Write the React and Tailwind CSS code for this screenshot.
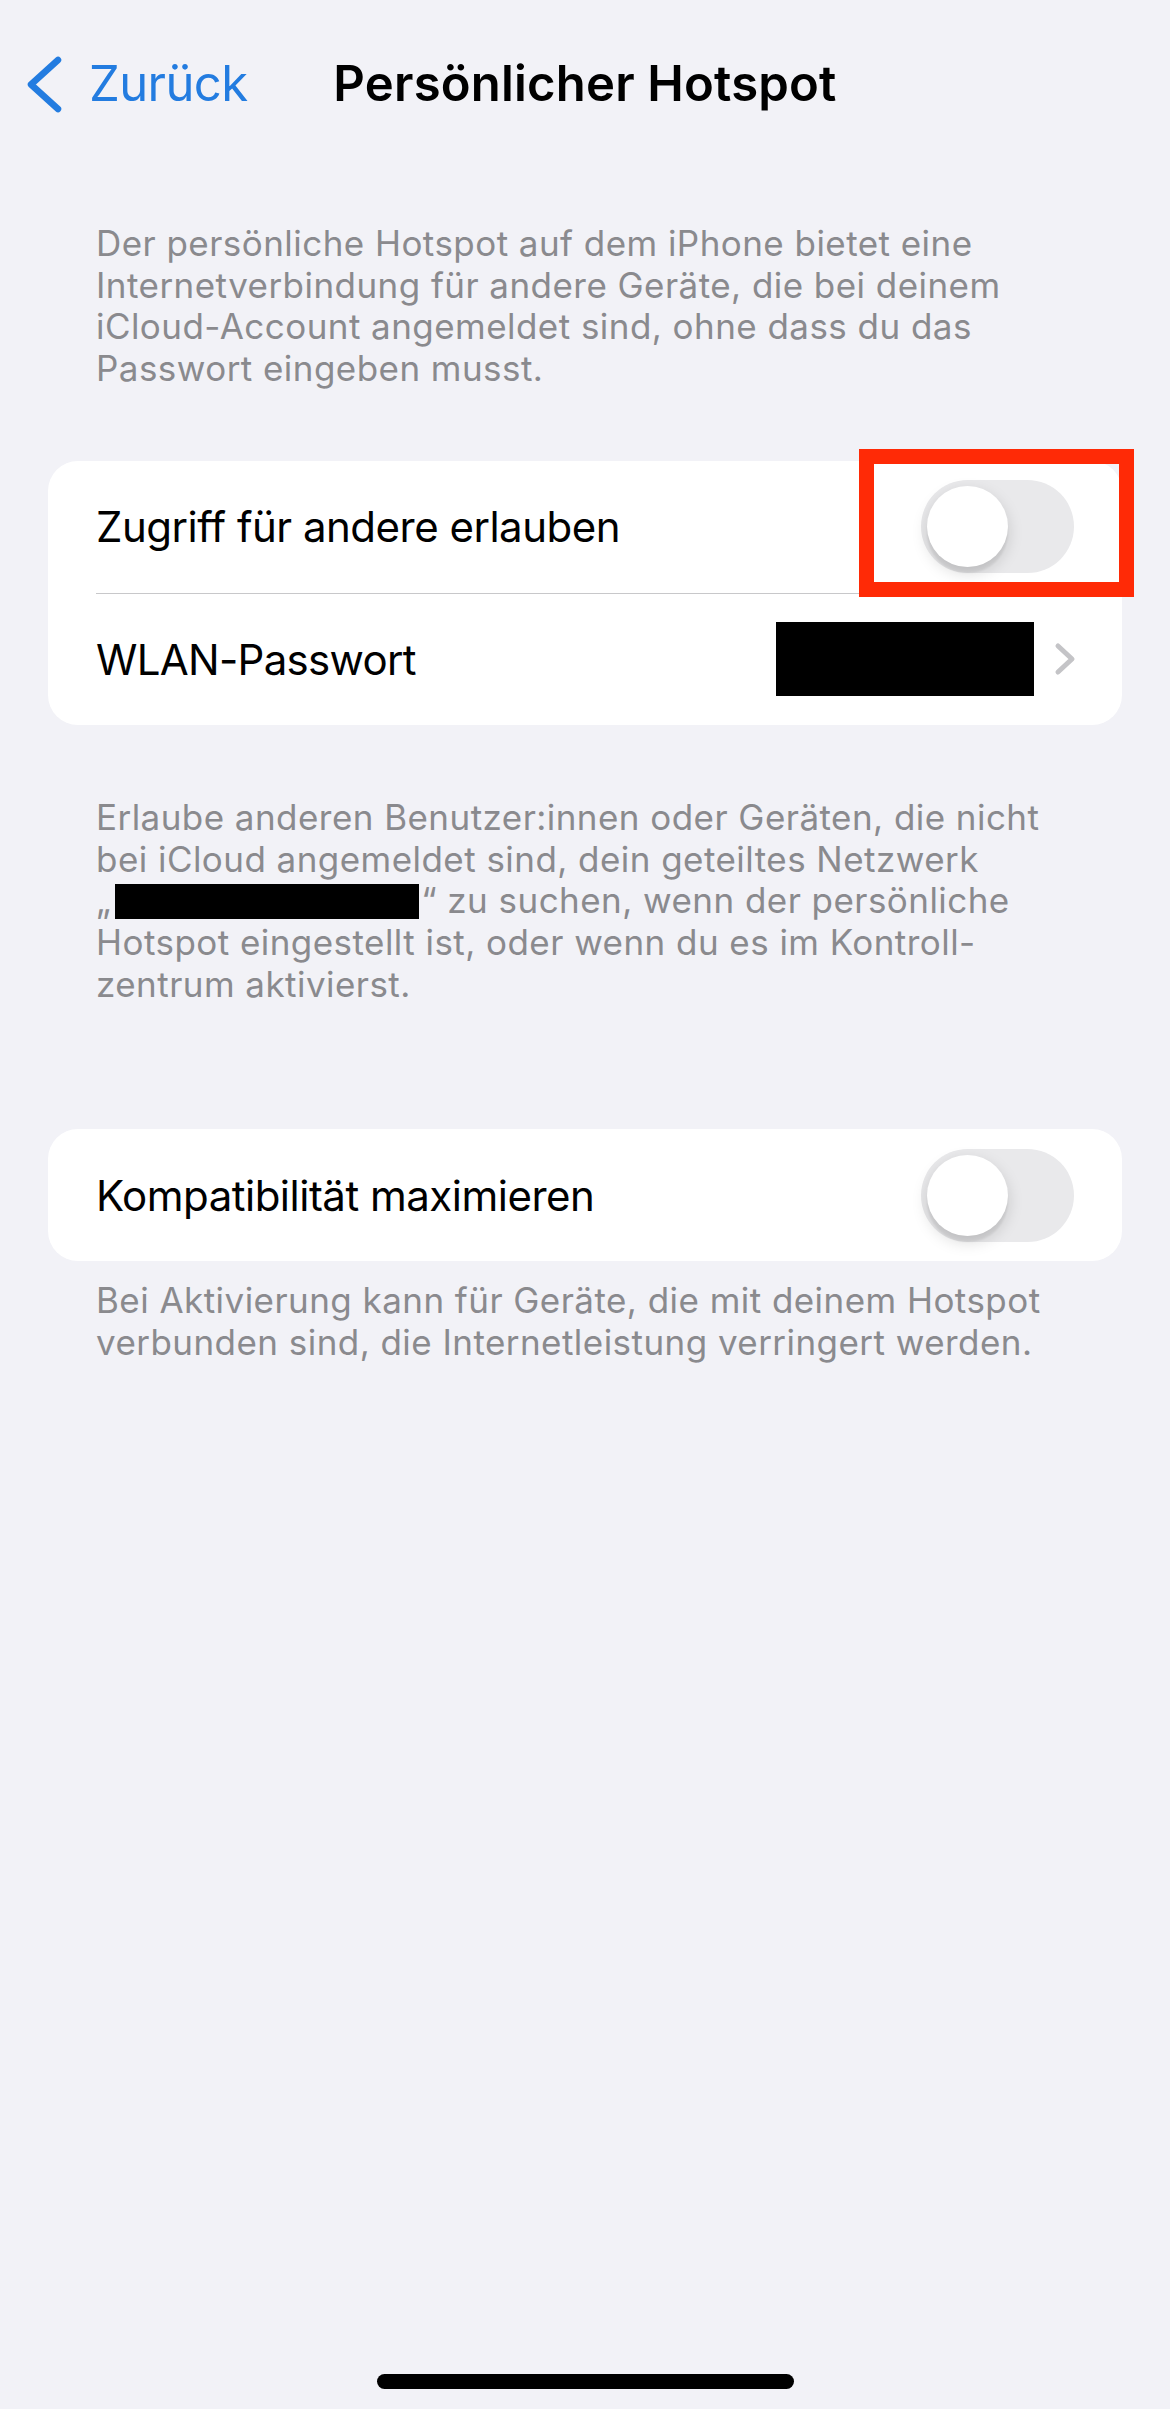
export default function App() {
  const desc = "whitespace-nowrap text-[35px] leading-[41.7px] text-[#8a8a8e] tracking-[0.45px]";
  return (
    <div className="relative flex min-h-[2409px] w-[1170px] flex-col bg-[#f2f2f7] [font-family:Inter,'Liberation_Sans',sans-serif]">
      {/* Nav bar */}
      <div className="grid h-[168px] grid-cols-[1fr_auto_1fr] items-center">
        <div className="flex items-center pl-[25px]">
          <svg width="40" height="60" viewBox="0 0 40 60" className="shrink-0">
            <polyline points="33,6 6,30.5 33,55" fill="none" stroke="#237ce0" strokeWidth="6.5" strokeLinecap="round" strokeLinejoin="round" />
          </svg>
          <span className="ml-[24px] text-[49px] leading-[56px] tracking-[-0.6px] text-[#237ce0]">Zurück</span>
        </div>
        <div className="text-[49px] font-semibold leading-[56px] tracking-[0.2px] text-black">Persönlicher Hotspot</div>
        <div />
      </div>

      {/* Header description */}
      <div className={`mt-[55px] px-[96px] ${desc}`}>
        <span className="block">Der persönliche Hotspot auf dem iPhone bietet eine</span>
        <span className="block">Internetverbindung für andere Geräte, die bei deinem</span>
        <span className="block">iCloud-Account angemeldet sind, ohne dass du das</span>
        <span className="block">Passwort eingeben musst.</span>
      </div>

      {/* Card 1 */}
      <div className="relative mx-[48px] mt-[71px] rounded-[30px] bg-white">
        <div className="flex h-[132px] items-center justify-between pl-[48px] pr-[48px]">
          <span className="text-[42px] tracking-[-0.5px] text-black">Zugriff für andere erlauben</span>
          <Toggle />
        </div>
        <div className="pl-[48px]">
          <div className="flex h-[132px] items-center border-t border-[#c8c8ca] pr-[44px]">
            <span className="text-[42px] tracking-[-0.7px] text-black">WLAN-Passwort</span>
            <div className="ml-auto h-[74px] w-[258px] bg-black" />
            <svg width="26" height="36" viewBox="0 0 26 36" className="ml-[18px] shrink-0">
              <polyline points="6,5 20,18 6,31" fill="none" stroke="#c4c4c7" strokeWidth="5" strokeLinecap="round" strokeLinejoin="round" />
            </svg>
          </div>
        </div>
        {/* red highlight box */}
        <div className="absolute left-[811px] top-[-12px] h-[148px] w-[275px] border-[15px] border-[#ff2a06]" />
      </div>

      {/* Footer 1 */}
      <div className={`mt-[72px] px-[96px] ${desc}`}>
        <span className="block">Erlaube anderen Benutzer:innen oder Geräten, die nicht</span>
        <span className="block">bei iCloud angemeldet sind, dein geteiltes Netzwerk</span>
        <span className="flex items-center">
          <span>„</span>
          <span className="ml-[4px] inline-block h-[35px] w-[304px] bg-black" />
          <span className="ml-[2px] whitespace-pre">“ zu suchen, wenn der persönliche</span>
        </span>
        <span className="block">Hotspot eingestellt ist, oder wenn du es im Kontroll-</span>
        <span className="block">zentrum aktivierst.</span>
      </div>

      {/* Card 2 */}
      <div className="mx-[48px] mt-[124px] rounded-[30px] bg-white">
        <div className="flex h-[132px] items-center justify-between pl-[48px] pr-[48px]">
          <span className="text-[42px] tracking-[-0.5px] text-black">Kompatibilität maximieren</span>
          <Toggle />
        </div>
      </div>

      {/* Footer 2 */}
      <div className={`mt-[19px] px-[96px] ${desc}`}>
        <span className="block">Bei Aktivierung kann für Geräte, die mit deinem Hotspot</span>
        <span className="block">verbunden sind, die Internetleistung verringert werden.</span>
      </div>

      {/* Home indicator */}
      <div className="mt-auto mb-[20px] h-[15px] w-[417px] self-center rounded-full bg-black" />
    </div>
  );
}

function Toggle() {
  return (
    <div className="flex h-[93px] w-[153px] shrink-0 items-center rounded-full bg-[#e9e9eb] p-[6px]">
      <div className="h-[81px] w-[81px] rounded-full bg-white shadow-[0_6px_16px_rgba(0,0,0,0.15),0_6px_2px_rgba(0,0,0,0.06)]" />
    </div>
  );
}
